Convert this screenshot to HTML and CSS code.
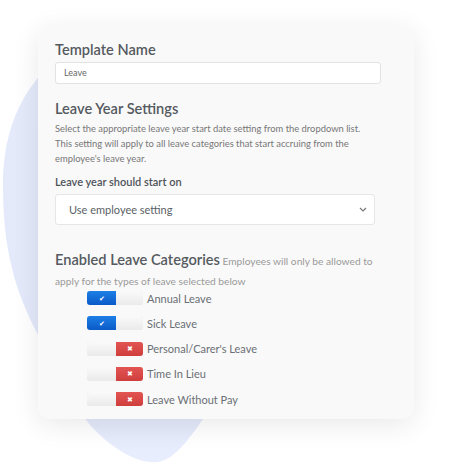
FILE: index.html
```html
<!DOCTYPE html>
<html lang="en">

<head>
    <meta charset="UTF-8">
    <meta name="viewport" content="width=device-width, initial-scale=1.0">
    <link rel="stylesheet" href="styles.css">
    <title>Leave Template</title>
</head>

<body>
    <svg class="blob" width="468" height="468" viewBox="0 0 468 468">
        <defs>
            <linearGradient id="blobFill" x1="0" y1="0" x2="0" y2="1">
                <stop offset="0" stop-color="#e4eafa" />
                <stop offset="0.88" stop-color="#e3e9fa" />
                <stop offset="1" stop-color="#e8eefd" />
            </linearGradient>
        </defs>
        <path d="M 75 45 C 25 78, 3 125, 3 185 C 3 250, 15 290, 37 333 C 55 370, 70 400, 90 425 C 115 452, 140 464, 158 462 C 170 460, 182 450, 203 419 L 260 330 L 200 45 Z"
            fill="url(#blobFill)" />
    </svg>

    <div class="card">
        <h2 class="title">Template Name</h2>
        <div class="input">Leave</div>

        <h2 class="title">Leave Year Settings</h2>
        <p class="desc">Select the appropriate leave year start date setting from the dropdown list. This setting will
            apply to all leave categories that start accruing from the employee's leave year.</p>

        <div class="label">Leave year should start on</div>
        <div class="select">
            <span>Use employee setting</span>
            <svg class="chevron" width="8" height="5" viewBox="0 0 8 5">
                <path d="M1 1 L4 4 L7 1" fill="none" stroke="#777" stroke-width="1.2" />
            </svg>
        </div>

        <p class="categories"><span class="heading">Enabled Leave Categories</span>
            <span>Employees will only be allowed to</span><br>
            <span>apply for the types of leave selected below</span>
        </p>

        <div class="toggles">
            <div class="row">
                <div class="toggle on"><span class="knob">&#10004;</span><span class="blank"></span></div>
                Annual Leave
            </div>
            <div class="row">
                <div class="toggle on"><span class="knob">&#10004;</span><span class="blank"></span></div>
                Sick Leave
            </div>
            <div class="row">
                <div class="toggle off"><span class="blank"></span><span class="knob">&#10006;</span></div>
                Personal/Carer's Leave
            </div>
            <div class="row">
                <div class="toggle off"><span class="blank"></span><span class="knob">&#10006;</span></div>
                Time In Lieu
            </div>
            <div class="row">
                <div class="toggle off"><span class="blank"></span><span class="knob">&#10006;</span></div>
                Leave Without Pay
            </div>
        </div>
    </div>
</body>

</html>
```

FILE: styles.css
```css
body {
    margin: 0;
    width: 468px;
    height: 468px;
    background-color: #fff;
    font-family: "Lato", "Open Sans", sans-serif;
    position: relative;
    overflow: hidden;
}

.blob {
    position: absolute;
    top: 0;
    left: 0;
}

.card {
    position: relative;
    margin: 25px 0 0 38px;
    width: 376px;
    height: 394px;
    box-sizing: border-box;
    padding: 15px 33px 0 17px;
    background-color: #f9f9f9;
    border-radius: 12px;
    box-shadow: 0 6px 28px rgba(0, 0, 0, 0.09);
}

.title {
    margin: 0;
    font-size: 14.6px;
    font-weight: 600;
    color: #555a60;
    line-height: 20px;
}

.input {
    margin: 2px 0 15px;
    height: 22px;
    box-sizing: border-box;
    border: 1px solid #e3e3e3;
    border-radius: 3px;
    background-color: #fff;
    padding-left: 8px;
    font-size: 9px;
    line-height: 20px;
    color: #666;
}

.desc {
    margin: 2px 0 0;
    max-width: 316px;
    font-size: 9.4px;
    line-height: 15px;
    color: #777;
}

.label {
    margin-top: 9px;
    font-size: 11px;
    font-weight: 600;
    color: #4f545a;
    line-height: 14px;
}

.select {
    margin-top: 5px;
    width: 320px;
    height: 31px;
    box-sizing: border-box;
    border: 1px solid #e6e6e6;
    border-radius: 3px;
    background-color: #fff;
    display: flex;
    align-items: center;
    justify-content: space-between;
    padding: 0 7px 0 13px;
    font-size: 11px;
    color: #5a5f66;
}

.categories {
    margin: 25px 0 0;
    font-size: 10.2px;
    line-height: 20px;
    color: #999;
}

.heading {
    font-size: 14.6px;
    font-weight: 600;
    color: #555a60;
}

.toggles {
    margin: 0 0 0 32px;
    display: flex;
    flex-direction: column;
    gap: 11.3px;
}

.row {
    display: flex;
    align-items: center;
    gap: 4px;
    font-size: 11px;
    color: #6a6f75;
    height: 14px;
}

.toggle {
    display: flex;
    width: 56px;
    height: 14px;
    border-radius: 3px;
    overflow: hidden;
    box-shadow: 0 0 0 1px #e0e0e0 inset;
}

.toggle span {
    display: flex;
    align-items: center;
    justify-content: center;
}

.blank {
    flex: 1;
    background: linear-gradient(#fafafa, #eaeaea);
}

.knob {
    width: 29px;
    font-size: 7px;
    color: #fff;
}

.on .knob {
    background: linear-gradient(#1e7fe6, #0a5ac8);
}

.off .knob {
    width: 27px;
    background: linear-gradient(#e25553, #cf3e3c);
}
```
